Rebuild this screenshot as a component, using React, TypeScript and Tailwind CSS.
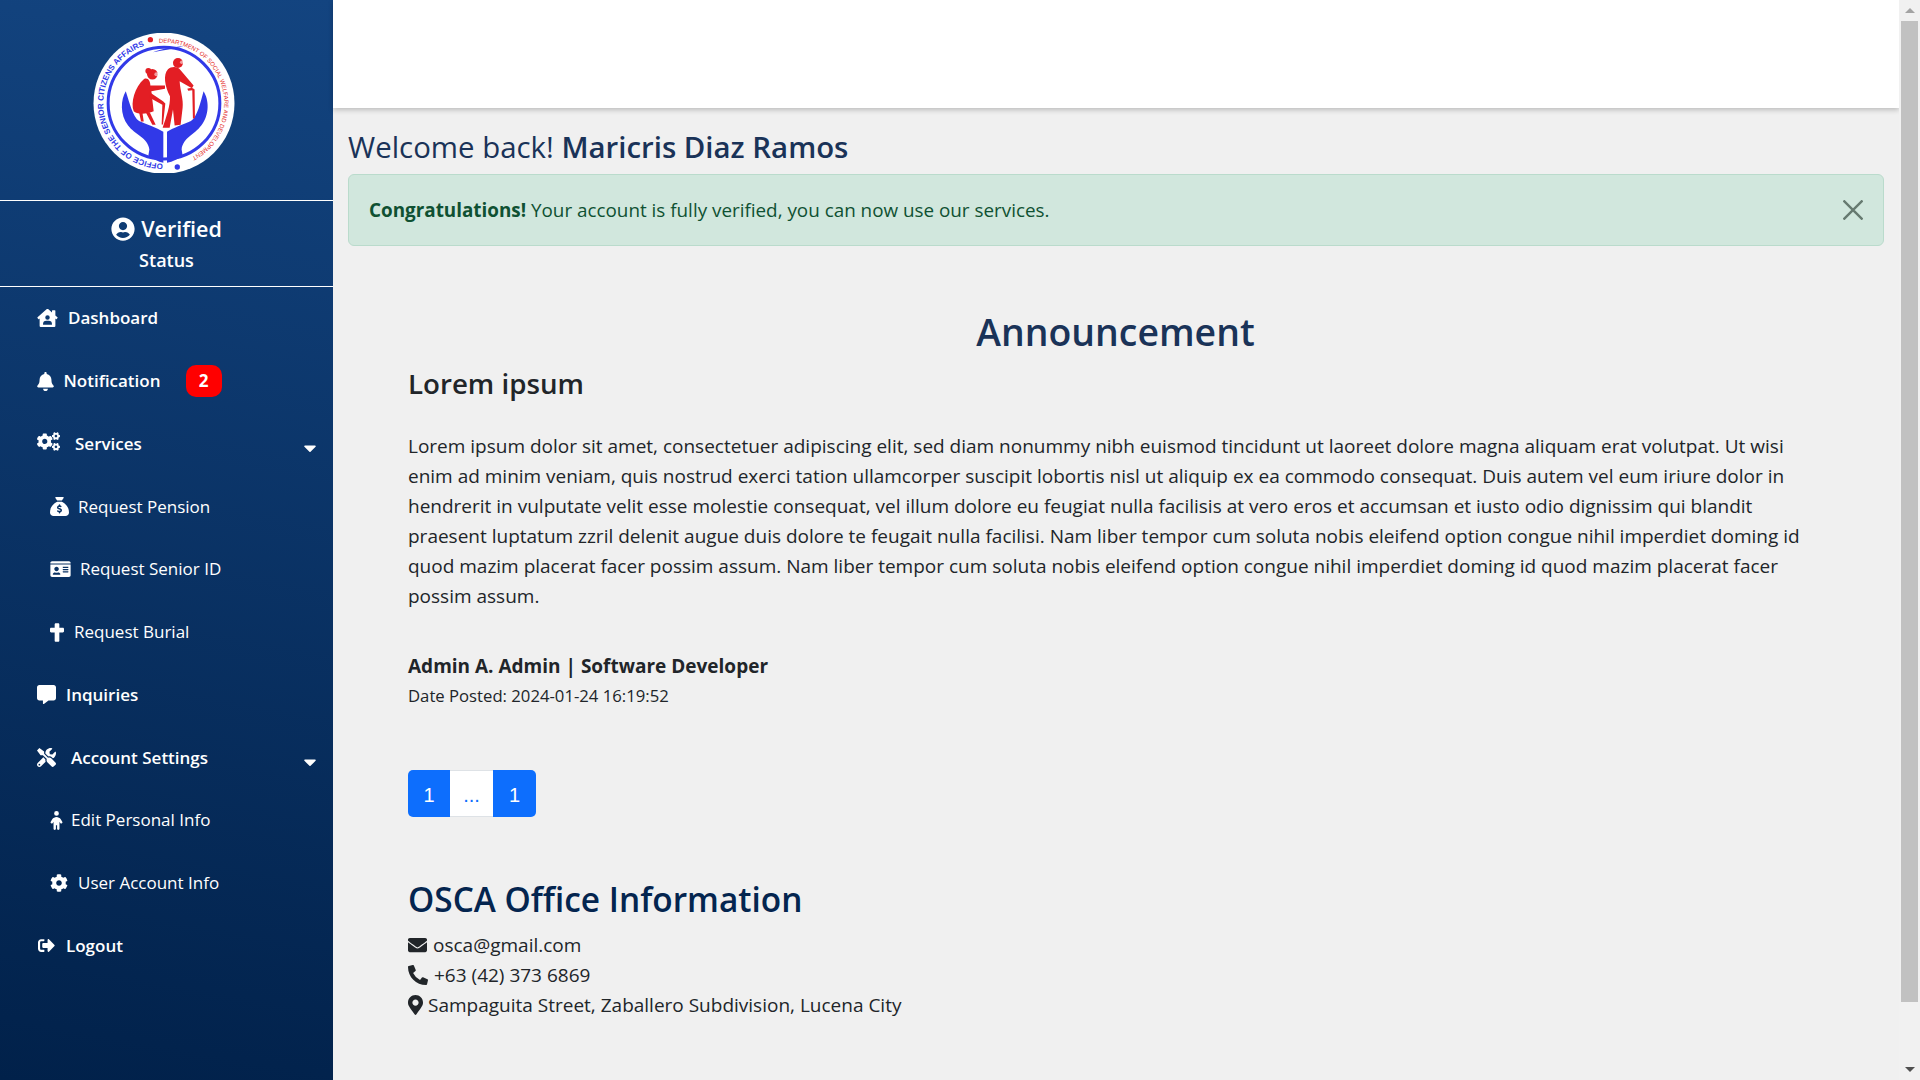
import React from "react";
import { FaHouseUser, FaBell, FaCogs, FaIdCard, FaCross, FaTools, FaCog, FaSignOutAlt, FaCaretDown, FaEnvelope, FaPhoneAlt, FaMapMarkerAlt, FaUserCircle } from "react-icons/fa";
import { FaSackDollar, FaMessage, FaChild } from "react-icons/fa6";

function Logo() {
  return (
    <svg viewBox="280 100 426 421" className="mr-[5px] mt-[6px] h-[140px] w-[142px]" aria-label="Office of the Senior Citizens Affairs logo">
      <circle cx="493" cy="311" r="212" fill="#ffffff" />
      <circle cx="493" cy="311" r="168" fill="none" stroke="#3139e8" strokeWidth="9" />
      <circle cx="452" cy="120" r="8" fill="#e31e24" />
      <circle cx="533" cy="503" r="8" fill="#3139e8" />
      <defs>
        <path id="logoArcBlue" d="M490 493 A182 182 0 0 1 430 140" />
        <path id="logoArcRed" d="M478 130 A182 182 0 0 1 576 473" />
      </defs>
      <text fontSize="24" fontWeight="700" fill="#3139e8" fontFamily="Liberation Sans, sans-serif">
        <textPath href="#logoArcBlue" textLength="510">OFFICE OF THE SENIOR CITIZENS AFFAIRS</textPath>
      </text>
      <text fontSize="18" fill="#e31e24" fontFamily="Liberation Sans, sans-serif">
        <textPath href="#logoArcRed" textLength="498">DEPARTMENT OF SOCIAL WELFARE AND DEVELOPMENT</textPath>
      </text>
      <path d="M460 158 C 485 148 520 142 552 140 C 525 148 490 152 460 158 Z" fill="#3139e8" />
      <path d="M378 275 C 363 300 360 345 385 378 C 405 405 445 415 449 450 L 446 468 C 460 478 475 487 491 490 L 491 397 C 470 385 440 375 418 365 C 398 350 390 310 378 275 Z" fill="#3139e8" />
      <path d="M612 275 C 628 300 631 345 605 378 C 585 405 550 415 546 450 L 549 468 C 535 478 520 487 502 490 L 502 397 C 522 385 552 375 574 365 C 594 350 602 310 612 275 Z" fill="#3139e8" />
      <g fill="#e31e24">
        <circle cx="458" cy="224" r="16" />
        <circle cx="446" cy="214" r="9" />
        <path d="M433 238 C 445 232 452 245 452 258 L 496 258 L 496 268 L 455 275 L 462 335 C 440 345 410 345 402 335 C 392 310 405 262 433 238 Z" />
        <path d="M452 280 L 490 305 L 497 312 L 490 375 L 486 375 L 488 316 L 450 295 Z" />
        <path d="M418 338 L 428 338 L 432 366 L 424 366 Z M 438 338 L 450 338 L 468 376 L 458 376 Z" />
        <circle cx="535" cy="190" r="15" />
        <path d="M505 209 C 515 200 535 200 543 212 L 582 258 L 577 266 L 540 245 C 542 275 552 300 549 325 L 543 376 L 525 378 L 520 330 L 510 385 L 489 385 C 500 350 512 320 511 290 C 495 260 490 225 505 209 Z" />
        <path d="M563 268 C 570 264 582 264 585 270 L 586 355 L 580 358 L 578 272 L 566 274 Z" />
      </g>
      <circle cx="470" cy="224" r="6" fill="#ffffff" fillOpacity="0.55" />
      <circle cx="546" cy="188" r="5" fill="#ffffff" fillOpacity="0.55" />
    </svg>
  );
}

type Item = { label: string; Icon: any; iconCls: string; rowCls: string; textCls: string; caret?: boolean; badge?: boolean };
const items: Item[] = [
  { label: "Dashboard", Icon: FaHouseUser, iconCls: "w-[21px] h-[18px] mr-[10px]", rowCls: "pl-[37px]", textCls: "font-semibold" },
  { label: "Notification", Icon: FaBell, iconCls: "w-[17px] h-[19px] mr-[9.5px]", rowCls: "pl-[37px]", textCls: "font-semibold", badge: true },
  { label: "Services", Icon: FaCogs, iconCls: "w-[23px] h-[19px] mr-[15px] mt-[-4px]", rowCls: "pl-[37px]", textCls: "font-semibold", caret: true },
  { label: "Request Pension", Icon: FaSackDollar, iconCls: "w-[19px] h-[19px] mr-[9px]", rowCls: "pl-[50px]", textCls: "font-normal" },
  { label: "Request Senior ID", Icon: FaIdCard, iconCls: "w-[21px] h-[18px] mr-[9px]", rowCls: "pl-[50px]", textCls: "font-normal" },
  { label: "Request Burial", Icon: FaCross, iconCls: "w-[14px] h-[19px] mr-[10px]", rowCls: "pl-[50px]", textCls: "font-normal" },
  { label: "Inquiries", Icon: FaMessage, iconCls: "w-[19px] h-[19px] mr-[10px]", rowCls: "pl-[37px]", textCls: "font-semibold" },
  { label: "Account Settings", Icon: FaTools, iconCls: "w-[19px] h-[19px] mr-[15px]", rowCls: "pl-[37px]", textCls: "font-semibold", caret: true },
  { label: "Edit Personal Info", Icon: FaChild, iconCls: "w-[13px] h-[19px] mr-[8px]", rowCls: "pl-[50px]", textCls: "font-normal" },
  { label: "User Account Info", Icon: FaCog, iconCls: "w-[18px] h-[18px] mr-[10px]", rowCls: "pl-[50px]", textCls: "font-normal" },
  { label: "Logout", Icon: FaSignOutAlt, iconCls: "w-[19px] h-[17px] mr-[10px]", rowCls: "pl-[37px]", textCls: "font-semibold" },
];

export default function App() {
  return (
    <div className="flex h-screen w-full overflow-hidden bg-[#f0f0f0] font-['Open_Sans','Noto_Sans',sans-serif] text-[19px] leading-[30px] text-[#212529]">
      <aside className="flex w-[333px] shrink-0 flex-col bg-[linear-gradient(190deg,#134480,#01214a)] text-white">
        <div className="flex h-[201px] items-center justify-center border-b border-white">
          <Logo />
        </div>
        <div className="flex h-[86px] flex-col items-center justify-center border-b border-white">
          <div className="flex items-center text-[21.5px] font-semibold leading-[30px]">
            <FaUserCircle className="mr-[6px] h-[24px] w-[24px]" />
            Verified
          </div>
          <div className="mt-[3px] text-[18px] font-semibold leading-[26px]">Status</div>
        </div>
        <nav className="flex flex-col text-[17px]">
          {items.map(({ label, Icon, iconCls, rowCls, textCls, caret, badge }) => (
            <div key={label} className={`flex h-[62.75px] items-center ${rowCls}`}>
              <Icon className={`shrink-0 ${iconCls}`} />
              <span className={textCls}>{label}</span>
              {badge && (
                <span className="ml-[25px] flex h-[32px] w-[36px] items-center justify-center rounded-[10px] bg-[#ff0000] text-[17px] font-bold text-white">2</span>
              )}
              {caret && <FaCaretDown className="ml-auto mr-[16px] mt-[8px] h-[20px] w-[14px]" />}
            </div>
          ))}
        </nav>
      </aside>

      <main className="flex min-w-0 flex-1 flex-col">
        <div className="h-[108px] shrink-0 bg-white shadow-[0_2px_5px_rgba(0,0,0,0.22)]" />
        <div className="flex flex-col pl-[15px] pr-[15px]">
          <h3 className="mt-[20px] h-[46px] text-[29.4px] font-normal leading-[38px] text-[#1a3358]">
            Welcome back! <span className="font-semibold">Maricris Diaz Ramos</span>
          </h3>
          <div className="flex h-[72px] items-center justify-between rounded-[6px] border border-[#badbcc] bg-[#d1e7dd] pl-[20px] pr-[20px] text-[18.85px] text-[#0f5132]">
            <span>
              <span className="font-bold">Congratulations!</span> Your account is fully verified, you can now use our services.
            </span>
            <svg viewBox="0 0 20 20" className="h-[20px] w-[20px]" fill="none" stroke="#667a70" strokeWidth="2.4">
              <path d="M0.5 0.5 L19.5 19.5 M19.5 0.5 L0.5 19.5" />
            </svg>
          </div>
          <div className="flex flex-col pl-[60px] pr-[61px]">
            <h2 className="mt-[61px] text-center text-[37.4px] font-semibold leading-[50px] text-[#1a3358]">Announcement</h2>
            <h4 className="mt-[6px] text-[27.7px] font-semibold leading-[40px]">Lorem ipsum</h4>
            <p className="mt-[28px] whitespace-nowrap">
              Lorem ipsum dolor sit amet, consectetuer adipiscing elit, sed diam nonummy nibh euismod tincidunt ut laoreet dolore magna aliquam erat volutpat. Ut wisi<br />
              enim ad minim veniam, quis nostrud exerci tation ullamcorper suscipit lobortis nisl ut aliquip ex ea commodo consequat. Duis autem vel eum iriure dolor in<br />
              hendrerit in vulputate velit esse molestie consequat, vel illum dolore eu feugiat nulla facilisis at vero eros et accumsan et iusto odio dignissim qui blandit<br />
              praesent luptatum zzril delenit augue duis dolore te feugait nulla facilisi. Nam liber tempor cum soluta nobis eleifend option congue nihil imperdiet doming id<br />
              quod mazim placerat facer possim assum. Nam liber tempor cum soluta nobis eleifend option congue nihil imperdiet doming id quod mazim placerat facer<br />
              possim assum.
            </p>
            <div className="mt-[40px] font-bold">Admin A. Admin | Software Developer</div>
            <div className="text-[16.7px]">Date Posted: 2024-01-24 16:19:52</div>
            <div className="mt-[59px] flex h-[47px] w-[128px] font-['Liberation_Sans',sans-serif] text-[20px]">
              <span className="flex w-[42px] items-center justify-center rounded-l-[5px] bg-[#0d6efd] pt-[2px] text-white">1</span>
              <span className="flex w-[43px] items-center justify-center border-y border-[#dee2e6] bg-white pt-[2px] text-[#0d6efd]">...</span>
              <span className="flex w-[43px] items-center justify-center rounded-r-[5px] bg-[#0d6efd] pt-[2px] text-white">1</span>
            </div>
            <h3 className="mt-[58px] text-[33.4px] font-semibold leading-[48px] text-[#04254f]">OSCA Office Information</h3>
            <div className="mt-[7px] flex items-center"><FaEnvelope className="mr-[6px] h-[20px] w-[19px]" />osca@gmail.com</div>
            <div className="flex items-center"><FaPhoneAlt className="mr-[6px] h-[20px] w-[20px]" />+63 (42) 373 6869</div>
            <div className="flex items-center"><FaMapMarkerAlt className="mr-[5px] h-[20px] w-[15px]" />Sampaguita Street, Zaballero Subdivision, Lucena City</div>
          </div>
        </div>
      </main>

      <div className="flex w-[21px] shrink-0 flex-col items-start bg-[#f1f1f1] pl-[2px]">
        <div className="flex h-[21px] w-[17px] shrink-0 items-center justify-center">
          <div className="h-0 w-0 border-x-[5px] border-b-[5px] border-x-transparent border-b-[#a3a3a3]" />
        </div>
        <div className="h-[981px] w-[17px] shrink-0 bg-[#c1c1c1]" />
        <div className="mt-auto flex h-[21px] w-[17px] shrink-0 items-center justify-center">
          <div className="h-0 w-0 border-x-[5px] border-t-[5px] border-x-transparent border-t-[#505050]" />
        </div>
      </div>
    </div>
  );
}
